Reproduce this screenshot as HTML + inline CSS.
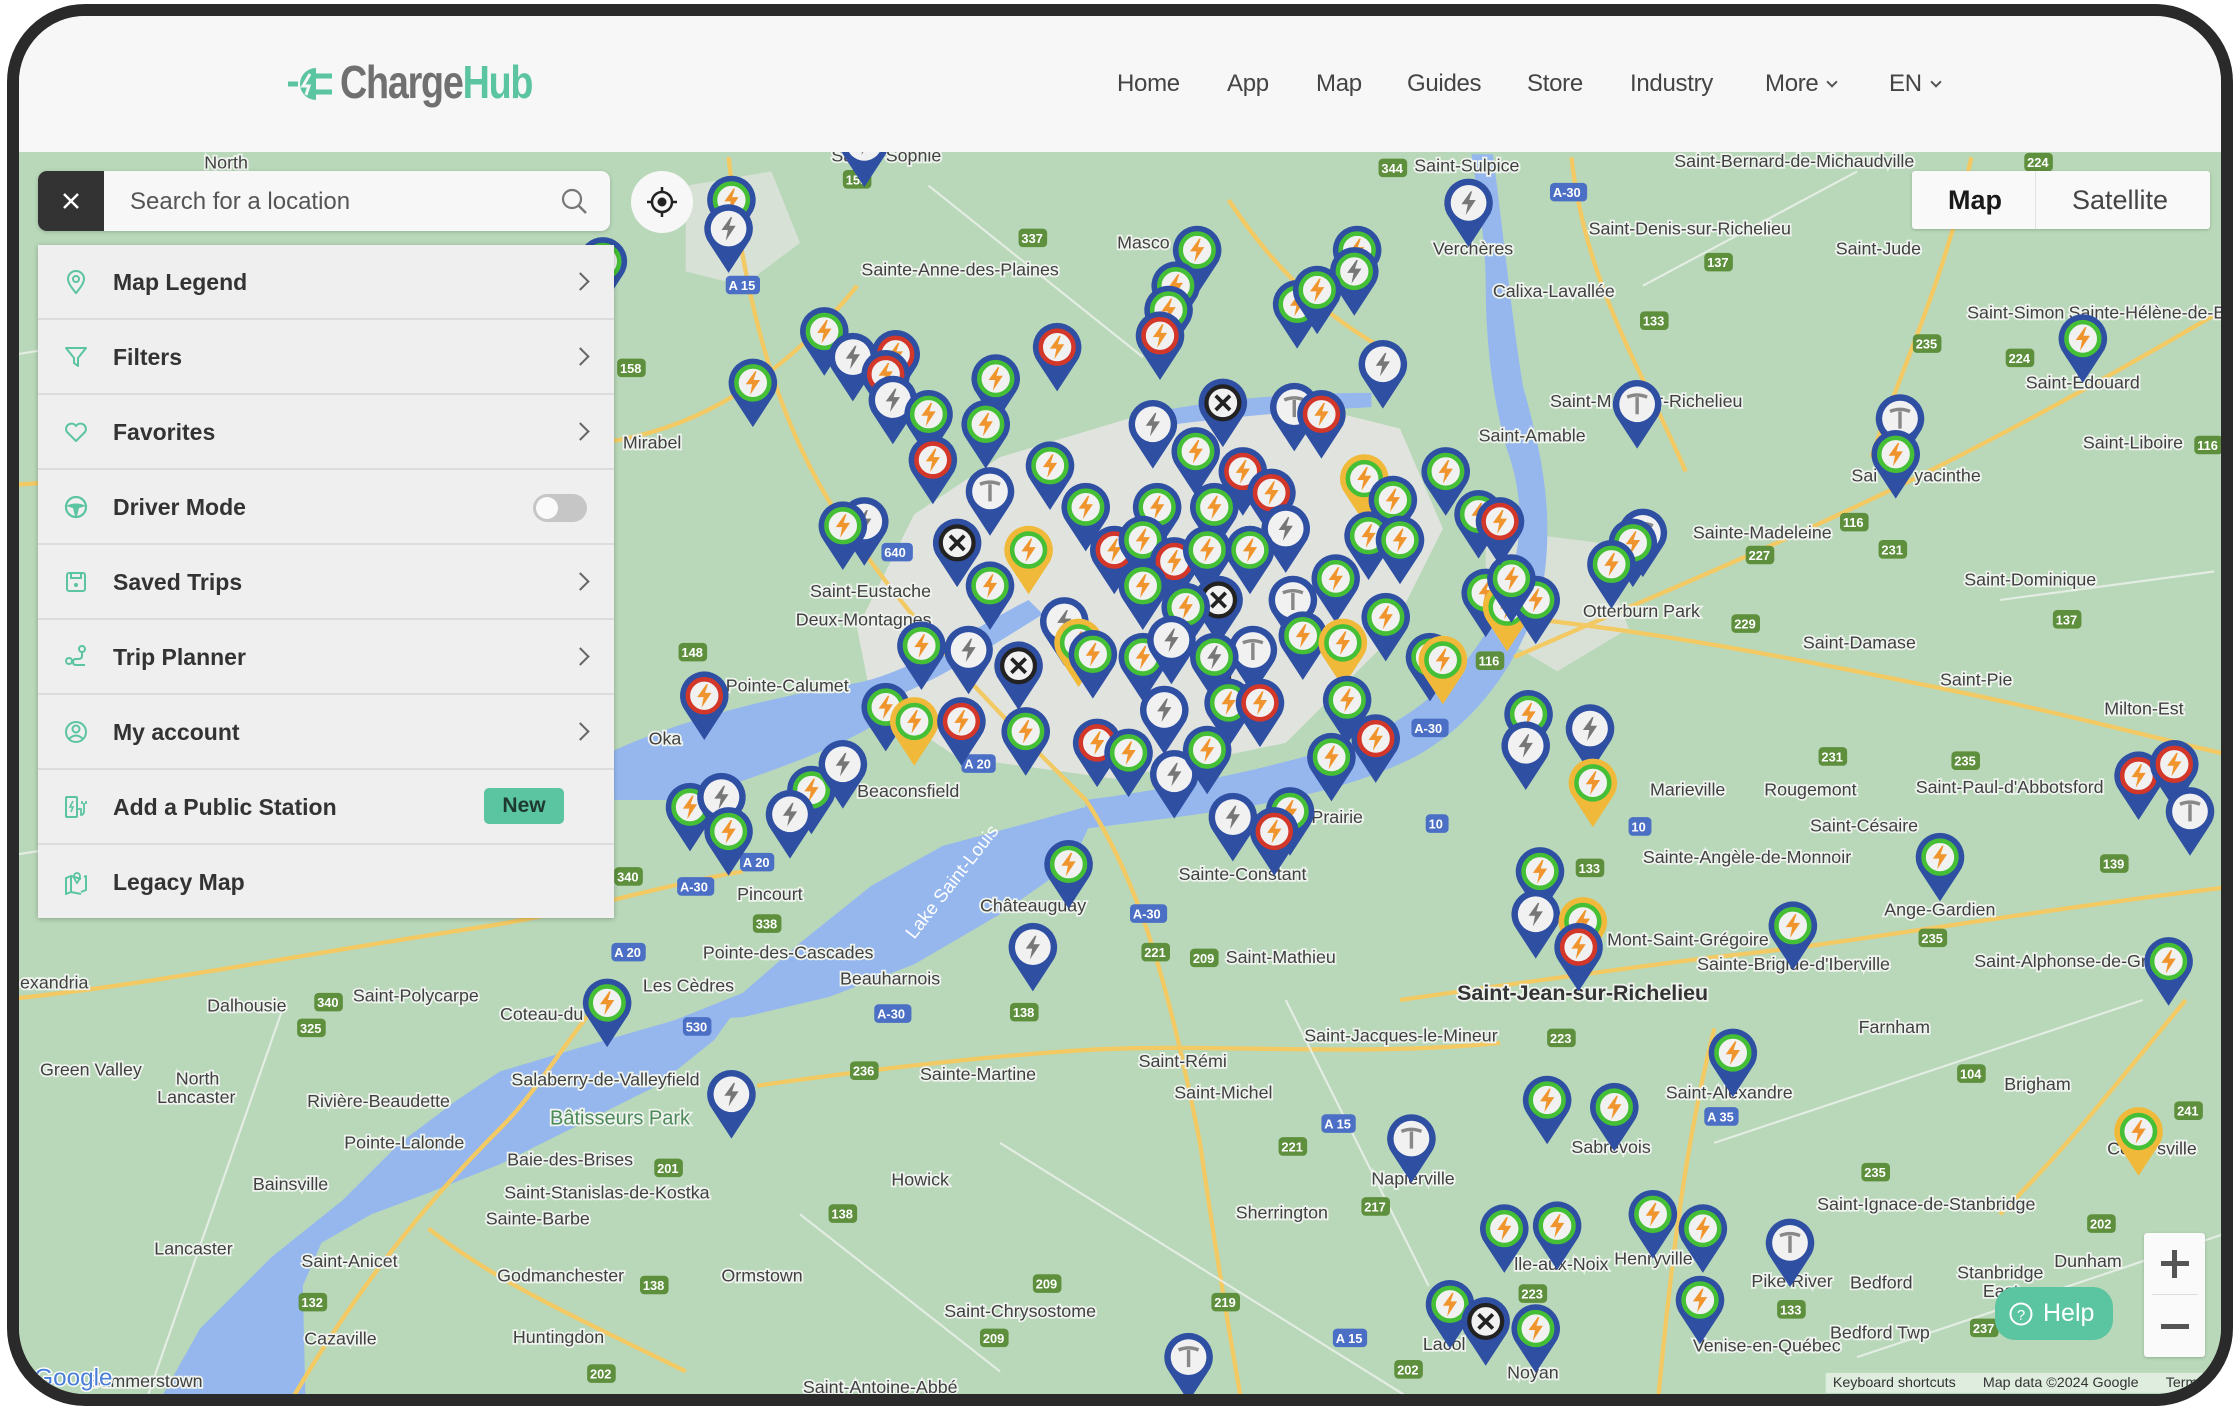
<!DOCTYPE html>
<html><head><meta charset="utf-8">
<style>
*{margin:0;padding:0;box-sizing:border-box}
html,body{width:2240px;height:1410px;overflow:hidden;background:#fff;font-family:"Liberation Sans",sans-serif}
#frame{position:absolute;left:7px;top:4px;width:2226px;height:1402px;border:12px solid #2a2a2a;border-radius:78px;overflow:hidden;background:#b9d8b9}
#inner{position:absolute;left:-19px;top:-16px;width:2240px;height:1410px}
.abs{position:absolute}
#header{left:0;top:0;width:2240px;height:152px;background:#f7f7f7}
.nav{position:absolute;top:70px;font-size:24px;color:#444;letter-spacing:-0.3px}
.chev{display:inline-block;width:8px;height:8px;border-right:2px solid #555;border-bottom:2px solid #555;transform:rotate(45deg);margin-left:10px;position:relative;top:-5px}
#search{left:38px;top:171px;width:572px;height:60px;background:#f7f7f7;border-radius:9px;overflow:hidden;box-shadow:0 1px 4px rgba(0,0,0,.2)}
#close{position:absolute;left:0;top:0;width:66px;height:60px;background:#333}
#panel{left:38px;top:245px;width:576px;height:673px;background:#efefef;box-shadow:0 1px 5px rgba(0,0,0,.25)}
.row{position:absolute;left:0;width:576px;height:75px;border-bottom:2px solid #dcdcdc}
.row .t{position:absolute;left:75px;top:24px;font-size:23px;font-weight:bold;color:#333}
.row svg.i{position:absolute;left:24px;top:23px}
.row .c{position:absolute;left:536px;top:30px;width:13px;height:13px;border-right:2px solid #666;border-top:2px solid #666;transform:rotate(45deg)}
</style></head><body>
<div id="frame"><div id="inner">

<svg class="abs" style="left:0;top:0" width="2240" height="1410" viewBox="0 0 1568 987">
<defs>
<path id="pin" d="M-13.6,10.2 A17 17 0 1 1 13.6 10.2 L0 31 Z"/>
<path id="bolt" d="M1.5,-8 L-5,1 L-0.5,1 L-2,8.5 L5,-2 L0.5,-2 L2.5,-8Z"/>
<g id="g"><use href="#pin" fill="#2f4fa3"/><circle r="11.5" fill="#f1f1f1" stroke="#45bf35" stroke-width="3.2"/><use href="#bolt" fill="#f0952d"/></g>
<g id="r"><use href="#pin" fill="#2f4fa3"/><circle r="11.5" fill="#f1f1f1" stroke="#d2372a" stroke-width="3.2"/><use href="#bolt" fill="#f0952d"/></g>
<g id="y"><use href="#pin" fill="#f0b93a"/><circle r="11.5" fill="#f1f1f1" stroke="#45bf35" stroke-width="3.2"/><use href="#bolt" fill="#f0952d"/></g>
<g id="k"><use href="#pin" fill="#2f4fa3"/><circle r="11.5" fill="#f1f1f1" stroke="#45bf35" stroke-width="3.2"/><use href="#bolt" fill="#777"/></g>
<g id="x"><use href="#pin" fill="#2f4fa3"/><circle r="11.5" fill="#f1f1f1" stroke="#222" stroke-width="3"/><path d="M-5,-5L5,5M5,-5L-5,5" stroke="#222" stroke-width="2.6"/></g>
<g id="t"><use href="#pin" fill="#2f4fa3"/><circle r="12.5" fill="#f1f1f1"/><path d="M-7,-5 Q0,-8 7,-5 M0,-5 L0,7" stroke="#888" stroke-width="2.4" fill="none"/></g>
<g id="s"><use href="#pin" fill="#2f4fa3"/><circle r="12.5" fill="#f1f1f1"/><use href="#bolt" fill="#777"/></g>
</defs>
<rect width="1568" height="987" fill="#b9d8b9"/>
<!-- urban -->
<path d="M600,440 L640,360 L700,320 L800,290 L900,280 L980,300 L1010,370 L970,450 L900,520 L780,545 L670,530 L610,490Z" fill="#e1e4de"/>
<path d="M1040,370 L1120,380 L1140,440 L1090,470 L1040,440Z" fill="#e1e4de" opacity=".8"/>
<path d="M480,130 L540,120 L560,170 L520,200 L480,190Z" fill="#dfe3dc" opacity=".8"/>
<!-- water -->
<g fill="#96b7ee">
<path d="M108,987 L140,930 L190,880 L240,840 L280,800 L320,770 L350,750 L400,735 L445,722 L480,712 L520,700 L500,728 L460,760 L400,790 L350,815 L300,835 L260,850 L225,870 L212,900 L214,987Z"/>
<path d="M470,715 L520,695 L560,660 L610,620 L660,592 L720,576 L770,562 L750,605 L700,640 L640,675 L580,698 L520,712Z"/>
<path d="M760,560 C820,552 880,540 940,522 C990,505 1030,470 1052,420 C1068,380 1066,345 1055,315 C1045,280 1040,240 1040,200 C1040,170 1035,140 1030,108 L1045,108 C1052,160 1058,220 1066,270 C1080,320 1088,360 1080,410 C1066,460 1036,505 990,530 C940,555 880,565 800,575 L760,580Z"/>
<path d="M420,530 C470,505 540,488 600,478 L630,495 C600,520 540,540 480,560 L430,560Z"/>
<path d="M600,478 C640,470 680,440 720,420 L730,430 C690,455 650,480 615,492Z"/>
<path d="M800,290 C850,280 900,275 960,275 L960,285 C900,288 850,293 800,300Z"/>
</g>
<!-- roads -->
<g fill="none" stroke="#f3c963" stroke-width="3">
<path d="M0,340 C150,330 300,320 420,310 C500,300 560,250 600,200"/>
<path d="M510,110 C520,200 540,300 600,380 C650,450 700,500 760,560 C800,620 820,700 840,800 C850,870 860,930 870,987"/>
<path d="M1060,460 C1150,420 1250,380 1350,330 C1430,290 1500,250 1568,210"/>
<path d="M1040,430 C1150,440 1250,460 1350,480 C1450,500 1520,520 1568,530"/>
<path d="M860,140 C900,200 940,230 980,250"/>
<path d="M980,700 C1050,690 1120,680 1200,670 C1300,660 1400,640 1568,620"/>
<path d="M1200,720 C1180,800 1170,880 1160,987"/>
<path d="M1400,850 C1450,800 1480,760 1530,700"/>
<path d="M0,700 C100,690 200,670 330,650 C400,640 460,620 520,610"/>
<path d="M430,690 C400,720 380,760 350,790 C300,840 250,900 200,987"/>
<path d="M530,760 C600,750 680,740 760,735 C850,730 950,740 1050,730"/>
<path d="M300,860 C350,900 420,930 480,960"/>
<path d="M1100,110 C1110,200 1150,260 1180,330"/>
<path d="M1380,110 C1360,200 1330,260 1310,320"/>
</g>
<g fill="none" stroke="#e9efe8" stroke-width="1.5" opacity=".9">
<path d="M0,250 L300,200 M100,987 L200,700 M0,600 L250,560 M700,800 L1000,987 M1200,800 L1500,700 M1300,950 L1568,860 M560,850 L700,960 M1150,200 L1300,120 M650,130 L800,250 M1400,420 L1550,400 M900,700 L1000,900"/>
</g>
<!-- labels -->
<g font-family="Liberation Sans, sans-serif" font-size="12.5" fill="#404040" stroke="#eef3ee" stroke-width="2.5" paint-order="stroke">
<text x="143" y="118">North</text><text x="582" y="113">Sa</text><text x="620" y="113">Sophie</text>
<text x="990" y="120">Saint-Sulpice</text><text x="1172" y="117">Saint-Bernard-de-Michaudville</text>
<text x="1112" y="164">Saint-Denis-sur-Richelieu</text><text x="1285" y="178">Saint-Jude</text>
<text x="1003" y="178">Verchères</text><text x="1045" y="208">Calixa-Lavallée</text>
<text x="603" y="193">Sainte-Anne-des-Plaines</text><text x="782" y="174">Masco</text>
<text x="1377" y="223">Saint-Simon</text><text x="1448" y="223">Sainte-Hélène-de-B</text>
<text x="1418" y="272">Saint-Édouard</text><text x="1085" y="285">Saint-M</text><text x="1160" y="285">r-Richelieu</text>
<text x="1035" y="309">Saint-Amable</text><text x="436" y="314">Mirabel</text><text x="1458" y="314">Saint-Liboire</text>
<text x="1296" y="337">Sai</text><text x="1340" y="337">yacinthe</text><text x="1185" y="377">Sainte-Madeleine</text>
<text x="1108" y="432">Otterburn Park</text><text x="1375" y="410">Saint-Dominique</text>
<text x="567" y="418">Saint-Eustache</text><text x="557" y="438">Deux-Montagnes</text>
<text x="1262" y="454">Saint-Damase</text><text x="1358" y="480">Saint-Pie</text>
<text x="508" y="484">Pointe-Calumet</text><text x="1473" y="500">Milton-Est</text>
<text x="454" y="521">Oka</text><text x="1155" y="557">Marieville</text><text x="1235" y="557">Rougemont</text>
<text x="1341" y="555">Saint-Paul-d'Abbotsford</text><text x="600" y="558">Beaconsfield</text>
<text x="1267" y="582">Saint-Césaire</text><text x="918" y="576">Prairie</text>
<text x="1150" y="604">Sainte-Angèle-de-Monnoir</text><text x="825" y="616">Sainte-Constant</text>
<text x="516" y="630">Pincourt</text><text x="686" y="638">Châteauguay</text><text x="1319" y="641">Ange-Gardien</text>
<text x="1125" y="662">Mont-Saint-Grégoire</text><text x="1188" y="679">Sainte-Brigide-d'Iberville</text>
<text x="492" y="671">Pointe-des-Cascades</text><text x="858" y="674">Saint-Mathieu</text>
<text x="1382" y="677">Saint-Alphonse-de-Gr</text><text x="14" y="692">exandria</text>
<text x="588" y="689">Beauharnois</text><text x="450" y="694">Les Cèdres</text>
<text x="145" y="708">Dalhousie</text><text x="247" y="701">Saint-Polycarpe</text><text x="350" y="714">Coteau-du</text>
<text x="1301" y="723">Farnham</text><text x="913" y="729">Saint-Jacques-le-Mineur</text>
<text x="28" y="753">Green Valley</text><text x="123" y="759">North</text><text x="110" y="772">Lancaster</text>
<text x="358" y="760">Salaberry-de-Valleyfield</text><text x="644" y="756">Sainte-Martine</text>
<text x="797" y="747">Saint-Rémi</text><text x="1403" y="763">Brigham</text><text x="1166" y="769">Saint-Alexandre</text>
<text x="822" y="769">Saint-Michel</text><text x="215" y="775">Rivière-Beaudette</text>
<text x="241" y="804">Pointe-Lalonde</text><text x="1100" y="807">Sabrevois</text>
<text x="355" y="816">Baie-des-Brises</text><text x="1475" y="808">Co</text><text x="1510" y="808">sville</text>
<text x="960" y="829">Napierville</text><text x="624" y="830">Howick</text><text x="177" y="833">Bainsville</text>
<text x="353" y="839">Saint-Stanislas-de-Kostka</text><text x="1272" y="847">Saint-Ignace-de-Stanbridge</text>
<text x="340" y="857">Sainte-Barbe</text><text x="865" y="853">Sherrington</text>
<text x="108" y="878">Lancaster</text><text x="211" y="887">Saint-Anicet</text><text x="1438" y="887">Dunham</text>
<text x="348" y="897">Godmanchester</text><text x="505" y="897">Ormstown</text><text x="1060" y="889">lle-aux-Noix</text><text x="1130" y="885">Henryville</text>
<text x="1226" y="901">Pike River</text><text x="1295" y="902">Bedford</text><text x="1370" y="895">Stanbridge</text><text x="1388" y="908">East</text>
<text x="661" y="922">Saint-Chrysostome</text><text x="213" y="941">Cazaville</text><text x="359" y="940">Huntingdon</text>
<text x="996" y="945">Lacol</text><text x="1185" y="946">Venise-en-Québec</text><text x="1281" y="937">Bedford Twp</text>
<text x="1055" y="965">Noyan</text><text x="62" y="971">Summerstown</text><text x="562" y="975">Saint-Antoine-Abbé</text>
<text x="1020" y="700" font-size="15" font-weight="bold" fill="#333">Saint-Jean-sur-Richelieu</text>
<text x="385" y="787" font-size="14" fill="#4d8a5a">Bâtisseurs Park</text>
<text x="640" y="658" font-size="13" fill="#fff" stroke="none" transform="rotate(-52 640 658)">Lake Saint-Louis</text>
</g>
<g font-family="Liberation Sans, sans-serif" font-size="9" font-weight="bold" fill="#fff">
<rect x="590" y="119" width="20" height="13" rx="3" fill="#5d8f3c"/><text x="592" y="129">158</text>
<rect x="713" y="160" width="20" height="13" rx="3" fill="#5d8f3c"/><text x="715" y="170">337</text>
<rect x="432" y="251" width="20" height="13" rx="3" fill="#5d8f3c"/><text x="434" y="261">158</text>
<rect x="965" y="111" width="20" height="13" rx="3" fill="#5d8f3c"/><text x="967" y="121">344</text>
<rect x="1193" y="177" width="20" height="13" rx="3" fill="#5d8f3c"/><text x="1195" y="187">137</text>
<rect x="1148" y="218" width="20" height="13" rx="3" fill="#5d8f3c"/><text x="1150" y="228">133</text>
<rect x="1339" y="234" width="20" height="13" rx="3" fill="#5d8f3c"/><text x="1341" y="244">235</text>
<rect x="1404" y="244" width="20" height="13" rx="3" fill="#5d8f3c"/><text x="1406" y="254">224</text>
<rect x="1313" y="307" width="20" height="13" rx="3" fill="#5d8f3c"/><text x="1315" y="317">137</text>
<rect x="1315" y="378" width="20" height="13" rx="3" fill="#5d8f3c"/><text x="1317" y="388">231</text>
<rect x="1222" y="382" width="20" height="13" rx="3" fill="#5d8f3c"/><text x="1224" y="392">227</text>
<rect x="1212" y="430" width="20" height="13" rx="3" fill="#5d8f3c"/><text x="1214" y="440">229</text>
<rect x="1437" y="427" width="20" height="13" rx="3" fill="#5d8f3c"/><text x="1439" y="437">137</text>
<rect x="1273" y="523" width="20" height="13" rx="3" fill="#5d8f3c"/><text x="1275" y="533">231</text>
<rect x="1366" y="526" width="20" height="13" rx="3" fill="#5d8f3c"/><text x="1368" y="536">235</text>
<rect x="430" y="607" width="20" height="13" rx="3" fill="#5d8f3c"/><text x="432" y="617">340</text>
<rect x="527" y="640" width="20" height="13" rx="3" fill="#5d8f3c"/><text x="529" y="650">338</text>
<rect x="799" y="660" width="20" height="13" rx="3" fill="#5d8f3c"/><text x="801" y="670">221</text>
<rect x="833" y="664" width="20" height="13" rx="3" fill="#5d8f3c"/><text x="835" y="674">209</text>
<rect x="220" y="695" width="20" height="13" rx="3" fill="#5d8f3c"/><text x="222" y="705">340</text>
<rect x="208" y="713" width="20" height="13" rx="3" fill="#5d8f3c"/><text x="210" y="723">325</text>
<rect x="707" y="702" width="20" height="13" rx="3" fill="#5d8f3c"/><text x="709" y="712">138</text>
<rect x="595" y="743" width="20" height="13" rx="3" fill="#5d8f3c"/><text x="597" y="753">236</text>
<rect x="1083" y="720" width="20" height="13" rx="3" fill="#5d8f3c"/><text x="1085" y="730">223</text>
<rect x="1370" y="745" width="20" height="13" rx="3" fill="#5d8f3c"/><text x="1372" y="755">104</text>
<rect x="1522" y="771" width="20" height="13" rx="3" fill="#5d8f3c"/><text x="1524" y="781">241</text>
<rect x="895" y="796" width="20" height="13" rx="3" fill="#5d8f3c"/><text x="897" y="806">221</text>
<rect x="458" y="811" width="20" height="13" rx="3" fill="#5d8f3c"/><text x="460" y="821">201</text>
<rect x="1303" y="814" width="20" height="13" rx="3" fill="#5d8f3c"/><text x="1305" y="824">235</text>
<rect x="953" y="838" width="20" height="13" rx="3" fill="#5d8f3c"/><text x="955" y="848">217</text>
<rect x="580" y="843" width="20" height="13" rx="3" fill="#5d8f3c"/><text x="582" y="853">138</text>
<rect x="1461" y="850" width="20" height="13" rx="3" fill="#5d8f3c"/><text x="1463" y="860">202</text>
<rect x="723" y="892" width="20" height="13" rx="3" fill="#5d8f3c"/><text x="725" y="902">209</text>
<rect x="448" y="893" width="20" height="13" rx="3" fill="#5d8f3c"/><text x="450" y="903">138</text>
<rect x="848" y="905" width="20" height="13" rx="3" fill="#5d8f3c"/><text x="850" y="915">219</text>
<rect x="1063" y="899" width="20" height="13" rx="3" fill="#5d8f3c"/><text x="1065" y="909">223</text>
<rect x="1244" y="910" width="20" height="13" rx="3" fill="#5d8f3c"/><text x="1246" y="920">133</text>
<rect x="209" y="905" width="20" height="13" rx="3" fill="#5d8f3c"/><text x="211" y="915">132</text>
<rect x="686" y="930" width="20" height="13" rx="3" fill="#5d8f3c"/><text x="688" y="940">209</text>
<rect x="976" y="952" width="20" height="13" rx="3" fill="#5d8f3c"/><text x="978" y="962">202</text>
<rect x="1379" y="923" width="20" height="13" rx="3" fill="#5d8f3c"/><text x="1381" y="933">237</text>
<rect x="411" y="955" width="20" height="13" rx="3" fill="#5d8f3c"/><text x="413" y="965">202</text>
<rect x="1417" y="107" width="20" height="13" rx="3" fill="#5d8f3c"/><text x="1419" y="117">224</text>
<rect x="1536" y="305" width="20" height="13" rx="3" fill="#5d8f3c"/><text x="1538" y="315">116</text>
<rect x="1288" y="359" width="20" height="13" rx="3" fill="#5d8f3c"/><text x="1290" y="369">116</text>
<rect x="1033" y="456" width="20" height="13" rx="3" fill="#5d8f3c"/><text x="1035" y="466">116</text>
<rect x="1103" y="601" width="20" height="13" rx="3" fill="#5d8f3c"/><text x="1105" y="611">133</text>
<rect x="1343" y="650" width="20" height="13" rx="3" fill="#5d8f3c"/><text x="1345" y="660">235</text>
<rect x="1470" y="598" width="20" height="13" rx="3" fill="#5d8f3c"/><text x="1472" y="608">139</text>
<rect x="475" y="450" width="20" height="13" rx="3" fill="#5d8f3c"/><text x="477" y="460">148</text>
<rect x="508" y="193" width="24" height="13" rx="3" fill="#4a6fc4"/><text x="510" y="203">A 15</text>
<rect x="1085" y="128" width="26" height="13" rx="3" fill="#4a6fc4"/><text x="1087" y="138">A-30</text>
<rect x="988" y="503" width="26" height="13" rx="3" fill="#4a6fc4"/><text x="990" y="513">A-30</text>
<rect x="518" y="597" width="24" height="13" rx="3" fill="#4a6fc4"/><text x="520" y="607">A 20</text>
<rect x="673" y="528" width="24" height="13" rx="3" fill="#4a6fc4"/><text x="675" y="538">A 20</text>
<rect x="428" y="660" width="24" height="13" rx="3" fill="#4a6fc4"/><text x="430" y="670">A 20</text>
<rect x="474" y="614" width="26" height="13" rx="3" fill="#4a6fc4"/><text x="476" y="624">A-30</text>
<rect x="612" y="703" width="26" height="13" rx="3" fill="#4a6fc4"/><text x="614" y="713">A-30</text>
<rect x="791" y="633" width="26" height="13" rx="3" fill="#4a6fc4"/><text x="793" y="643">A-30</text>
<rect x="478" y="712" width="20" height="13" rx="3" fill="#4a6fc4"/><text x="480" y="722">530</text>
<rect x="925" y="780" width="24" height="13" rx="3" fill="#4a6fc4"/><text x="927" y="790">A 15</text>
<rect x="933" y="930" width="24" height="13" rx="3" fill="#4a6fc4"/><text x="935" y="940">A 15</text>
<rect x="1193" y="775" width="24" height="13" rx="3" fill="#4a6fc4"/><text x="1195" y="785">A 35</text>
<rect x="998" y="570" width="16" height="13" rx="3" fill="#4a6fc4"/><text x="1000" y="580">10</text>
<rect x="1140" y="572" width="16" height="13" rx="3" fill="#4a6fc4"/><text x="1142" y="582">10</text>
<rect x="617" y="380" width="22" height="13" rx="3" fill="#4a6fc4"/><text x="619" y="390">640</text>
</g>
<text x="24" y="970" font-family="Liberation Sans, sans-serif" font-size="17" fill="#4a7fd8" stroke="#fff" stroke-width="2" paint-order="stroke">Google</text>
<text x="845" y="486" font-family="Liberation Sans, sans-serif" font-size="22" font-weight="bold" fill="#333">al</text>
<!-- markers -->
<g>
<use href="#g" x="422" y="183"/><use href="#g" x="512" y="140"/><use href="#s" x="510" y="160"/><use href="#g" x="527" y="268"/>
<use href="#g" x="577" y="232"/><use href="#s" x="597" y="250"/><use href="#r" x="627" y="248"/><use href="#r" x="620" y="262"/>
<use href="#s" x="625" y="280"/><use href="#g" x="650" y="290"/><use href="#g" x="697" y="265"/><use href="#g" x="690" y="297"/>
<use href="#r" x="653" y="322"/><use href="#r" x="740" y="243"/><use href="#g" x="838" y="175"/><use href="#g" x="823" y="200"/>
<use href="#g" x="818" y="217"/><use href="#r" x="812" y="235"/><use href="#s" x="807" y="297"/><use href="#x" x="856" y="282"/>
<use href="#g" x="837" y="316"/><use href="#g" x="735" y="326"/><use href="#t" x="693" y="344"/><use href="#s" x="605" y="365"/>
<use href="#g" x="590" y="368"/><use href="#x" x="670" y="380"/><use href="#g" x="760" y="355"/><use href="#g" x="810" y="355"/>
<use href="#g" x="850" y="355"/><use href="#r" x="870" y="330"/><use href="#r" x="890" y="345"/><use href="#y" x="720" y="385"/>
<use href="#r" x="780" y="385"/><use href="#g" x="800" y="378"/><use href="#s" x="900" y="370"/><use href="#r" x="822" y="393"/>
<use href="#g" x="845" y="385"/><use href="#g" x="875" y="385"/><use href="#g" x="693" y="410"/><use href="#x" x="853" y="420"/>
<use href="#t" x="905" y="420"/><use href="#g" x="935" y="405"/><use href="#g" x="800" y="410"/><use href="#g" x="830" y="425"/>
<use href="#s" x="745" y="435"/><use href="#y" x="755" y="450"/><use href="#g" x="765" y="458"/><use href="#g" x="800" y="460"/>
<use href="#s" x="820" y="448"/><use href="#t" x="877" y="455"/><use href="#k" x="850" y="460"/><use href="#g" x="912" y="445"/>
<use href="#y" x="940" y="450"/><use href="#g" x="970" y="432"/><use href="#g" x="1001" y="460"/><use href="#y" x="1010" y="462"/>
<use href="#g" x="1040" y="415"/><use href="#y" x="1055" y="425"/><use href="#g" x="1075" y="420"/><use href="#g" x="1058" y="405"/>
<use href="#g" x="1035" y="360"/><use href="#r" x="1050" y="365"/><use href="#g" x="1012" y="330"/><use href="#y" x="955" y="335"/>
<use href="#g" x="975" y="350"/><use href="#g" x="958" y="375"/><use href="#g" x="980" y="378"/><use href="#g" x="908" y="213"/>
<use href="#g" x="950" y="175"/><use href="#k" x="948" y="190"/><use href="#g" x="922" y="203"/><use href="#s" x="968" y="255"/>
<use href="#t" x="906" y="285"/><use href="#r" x="925" y="290"/><use href="#s" x="1028" y="142"/><use href="#t" x="1146" y="283"/>
<use href="#t" x="1150" y="373"/><use href="#g" x="1143" y="380"/><use href="#g" x="1128" y="395"/><use href="#t" x="1330" y="293"/>
<use href="#g" x="1327" y="318"/><use href="#g" x="1458" y="237"/><use href="#g" x="645" y="452"/><use href="#s" x="678" y="455"/>
<use href="#x" x="713" y="466"/><use href="#g" x="620" y="495"/><use href="#y" x="640" y="505"/><use href="#r" x="673" y="505"/>
<use href="#g" x="718" y="512"/><use href="#r" x="768" y="520"/><use href="#g" x="790" y="527"/><use href="#s" x="822" y="542"/>
<use href="#g" x="845" y="525"/><use href="#s" x="815" y="497"/><use href="#g" x="860" y="492"/><use href="#r" x="882" y="492"/>
<use href="#g" x="943" y="490"/><use href="#g" x="932" y="530"/><use href="#r" x="963" y="517"/><use href="#r" x="493" y="487"/>
<use href="#g" x="483" y="565"/><use href="#s" x="505" y="558"/><use href="#g" x="510" y="582"/><use href="#g" x="568" y="553"/>
<use href="#s" x="553" y="570"/><use href="#s" x="590" y="535"/><use href="#g" x="748" y="605"/><use href="#s" x="723" y="663"/>
<use href="#g" x="425" y="702"/><use href="#s" x="512" y="766"/><use href="#s" x="863" y="572"/><use href="#g" x="903" y="568"/>
<use href="#r" x="892" y="582"/><use href="#g" x="1070" y="500"/><use href="#s" x="1068" y="522"/><use href="#s" x="1113" y="510"/>
<use href="#y" x="1115" y="548"/><use href="#g" x="1078" y="610"/><use href="#s" x="1075" y="640"/><use href="#y" x="1108" y="645"/>
<use href="#r" x="1105" y="663"/><use href="#g" x="1255" y="648"/><use href="#g" x="1358" y="600"/><use href="#r" x="1497" y="543"/>
<use href="#r" x="1522" y="535"/><use href="#t" x="1533" y="568"/><use href="#g" x="1518" y="673"/><use href="#y" x="1497" y="792"/>
<use href="#g" x="1213" y="737"/><use href="#g" x="1083" y="770"/><use href="#g" x="1130" y="775"/><use href="#t" x="988" y="797"/>
<use href="#g" x="1053" y="860"/><use href="#g" x="1090" y="858"/><use href="#g" x="1157" y="850"/><use href="#g" x="1192" y="860"/>
<use href="#t" x="1253" y="870"/><use href="#g" x="1190" y="910"/><use href="#g" x="1015" y="913"/><use href="#x" x="1040" y="925"/>
<use href="#g" x="1075" y="930"/><use href="#t" x="832" y="950"/><use href="#s" x="605" y="100"/>
</g>
<!-- attribution -->
<rect x="1278" y="961" width="290" height="14" fill="#fff" opacity=".55"/>
<g font-family="Liberation Sans, sans-serif" font-size="10" fill="#333"><text x="1283" y="971">Keyboard shortcuts</text><text x="1388" y="971">Map data ©2024 Google</text><text x="1516" y="971">Terms</text></g>
</svg>

<div id="header" class="abs">
  <svg class="abs" style="left:286px;top:64px" width="50" height="40" viewBox="0 0 50 40">
    <path d="M2,20 H12" stroke="#5bc4a0" stroke-width="5"/>
    <path d="M30,4 A16 16 0 1 0 30 36 Z" fill="#5bc4a0"/>
    <path d="M30,12 H46 M30,28 H46" stroke="#5bc4a0" stroke-width="5"/>
    <path d="M24,10 L17,22 H23 L20,31" stroke="#f7f7f7" stroke-width="3" fill="none"/>
  </svg>
  <div class="abs" style="left:340px;top:55px;font-size:46px;font-weight:bold;letter-spacing:-1.5px;transform:scaleX(0.82);transform-origin:left"><span style="color:#707070">Charge</span><span style="color:#5bc4a0">Hub</span></div>
  <div class="nav" style="left:1117px">Home</div>
  <div class="nav" style="left:1227px">App</div>
  <div class="nav" style="left:1316px">Map</div>
  <div class="nav" style="left:1407px">Guides</div>
  <div class="nav" style="left:1527px">Store</div>
  <div class="nav" style="left:1630px">Industry</div>
  <div class="nav" style="left:1765px">More<span class="chev"></span></div>
  <div class="nav" style="left:1889px">EN<span class="chev"></span></div>
</div>

<div id="search" class="abs">
  <div id="close"><svg width="66" height="60"><path d="M26,23 L40,37 M40,23 L26,37" stroke="#fff" stroke-width="2.5"/></svg></div>
  <div class="abs" style="left:92px;top:17px;font-size:24px;color:#555">Search for a location</div>
  <svg class="abs" style="left:522px;top:16px" width="30" height="30"><circle cx="12" cy="12" r="9" stroke="#777" stroke-width="2.2" fill="none"/><path d="M19,19 L26,26" stroke="#777" stroke-width="2.5"/></svg>
</div>
<svg class="abs" style="left:630px;top:170px" width="64" height="64"><circle cx="32" cy="32" r="31" fill="#f7f7f7"/><circle cx="32" cy="32" r="10" stroke="#222" stroke-width="2.5" fill="none"/><circle cx="32" cy="32" r="4.5" fill="#222"/><path d="M32,17V22M32,42V47M17,32H22M42,32H47" stroke="#222" stroke-width="2.5"/></svg>

<div id="panel" class="abs">
  <div class="row" style="top:0"><svg class="i" width="28" height="28" viewBox="0 0 28 28"><path d="M14,25 C8,18 6,14 6,11 A8 8 0 0 1 22 11 C22,14 20,18 14,25Z" fill="none" stroke="#5bc4a0" stroke-width="2"/><circle cx="14" cy="11" r="3" fill="none" stroke="#5bc4a0" stroke-width="2"/></svg><div class="t">Map Legend</div><div class="c"></div></div>
  <div class="row" style="top:75px"><svg class="i" width="28" height="28" viewBox="0 0 28 28"><path d="M4,5 H24 L16,15 V23 L12,20 V15Z" fill="none" stroke="#5bc4a0" stroke-width="2" stroke-linejoin="round"/></svg><div class="t">Filters</div><div class="c"></div></div>
  <div class="row" style="top:150px"><svg class="i" width="28" height="28" viewBox="0 0 28 28"><path d="M14,23 L5,14 A5 5 0 0 1 14 8 A5 5 0 0 1 23 14Z" fill="none" stroke="#5bc4a0" stroke-width="2" stroke-linejoin="round"/></svg><div class="t">Favorites</div><div class="c"></div></div>
  <div class="row" style="top:225px"><svg class="i" width="28" height="28" viewBox="0 0 28 28"><circle cx="14" cy="14" r="10" fill="none" stroke="#5bc4a0" stroke-width="2.2"/><path d="M4,13 Q14,8 24,13 L17,15 L15,23 H13 L11,15Z" fill="#5bc4a0"/></svg><div class="t">Driver Mode</div>
    <div class="abs" style="left:495px;top:24px;width:54px;height:28px;border-radius:14px;background:#c6c6c6"><div class="abs" style="left:3px;top:3px;width:22px;height:22px;border-radius:11px;background:#fafafa"></div></div></div>
  <div class="row" style="top:300px"><svg class="i" width="28" height="28" viewBox="0 0 28 28"><rect x="5" y="5" width="18" height="18" rx="2" fill="none" stroke="#5bc4a0" stroke-width="2"/><path d="M9,5 V10 H19 V5" fill="none" stroke="#5bc4a0" stroke-width="2"/><circle cx="14" cy="17" r="2" fill="#5bc4a0"/></svg><div class="t">Saved Trips</div><div class="c"></div></div>
  <div class="row" style="top:375px"><svg class="i" width="28" height="28" viewBox="0 0 28 28"><circle cx="20" cy="6" r="3" fill="none" stroke="#5bc4a0" stroke-width="2"/><circle cx="7" cy="18" r="3" fill="none" stroke="#5bc4a0" stroke-width="2"/><path d="M20,9 V13 Q20,16 16,16 H14 Q11,16 11,19 Q11,22 14,22 H23" fill="none" stroke="#5bc4a0" stroke-width="2"/></svg><div class="t">Trip Planner</div><div class="c"></div></div>
  <div class="row" style="top:450px"><svg class="i" width="28" height="28" viewBox="0 0 28 28"><circle cx="14" cy="14" r="10" fill="none" stroke="#5bc4a0" stroke-width="2"/><circle cx="14" cy="11" r="3.5" fill="none" stroke="#5bc4a0" stroke-width="2"/><path d="M7,21 Q14,14 21,21" fill="none" stroke="#5bc4a0" stroke-width="2"/></svg><div class="t">My account</div><div class="c"></div></div>
  <div class="row" style="top:525px"><svg class="i" width="28" height="28" viewBox="0 0 28 28"><rect x="4" y="4" width="11" height="20" rx="1" fill="none" stroke="#5bc4a0" stroke-width="2"/><path d="M11,8 L8,14 H11 L9,19" stroke="#5bc4a0" stroke-width="1.6" fill="none"/><path d="M15,16 H19 V22 Q22,22 22,18 V10 M20,8 V11 M24,8 V11" stroke="#5bc4a0" stroke-width="1.8" fill="none"/></svg><div class="t">Add a Public Station</div>
    <div class="abs" style="left:446px;top:18px;width:80px;height:36px;border-radius:5px;background:#5bc4a0;color:#1e3a30;font-size:21px;font-weight:bold;text-align:center;line-height:36px">New</div></div>
  <div class="row" style="top:600px;border-bottom:none"><svg class="i" width="28" height="28" viewBox="0 0 28 28"><path d="M4,10 L9,8 V24 L4,26Z M9,8 L19,11 M19,24 L24,22 V8 L22,9" fill="none" stroke="#5bc4a0" stroke-width="2" stroke-linejoin="round"/><path d="M9,24 L19,26" stroke="#5bc4a0" stroke-width="2"/><path d="M15,15 C12,11 12,9 12,8 A3 3 0 0 1 18 8 C18,9 18,11 15,15Z" fill="none" stroke="#5bc4a0" stroke-width="1.8"/></svg><div class="t">Legacy Map</div></div>
</div>

<div class="abs" style="left:1912px;top:171px;width:298px;height:58px;background:#f9f9f9;border-radius:3px;box-shadow:0 1px 3px rgba(0,0,0,.2)">
  <div class="abs" style="left:123px;top:0;width:1px;height:58px;background:#e2e2e2"></div>
  <div class="abs" style="left:36px;top:14px;font-size:27px;font-weight:bold;color:#1a1a1a">Map</div>
  <div class="abs" style="left:160px;top:14px;font-size:27px;color:#444">Satellite</div>
</div>

<div class="abs" style="left:1995px;top:1287px;width:118px;height:53px;border-radius:20px;background:#5bc4a0">
  <svg class="abs" style="left:12px;top:13px" width="28" height="28"><circle cx="14" cy="14" r="10.5" fill="none" stroke="#fff" stroke-width="2"/><text x="14" y="20" font-family="Liberation Sans, sans-serif" font-size="15" fill="#fff" text-anchor="middle">?</text></svg>
  <div class="abs" style="left:48px;top:12px;font-size:25px;color:#fff">Help</div>
</div>
<div class="abs" style="left:2144px;top:1233px;width:61px;height:124px;background:#fafafa;border-radius:3px;box-shadow:0 1px 3px rgba(0,0,0,.2)">
  <div class="abs" style="left:17px;top:28px;width:28px;height:5px;background:#555"></div>
  <div class="abs" style="left:28px;top:17px;width:5px;height:28px;background:#555"></div>
  <div class="abs" style="left:8px;top:61px;width:46px;height:1px;background:#ddd"></div>
  <div class="abs" style="left:17px;top:91px;width:28px;height:5px;background:#555"></div>
</div>

</div></div>
</body></html>
